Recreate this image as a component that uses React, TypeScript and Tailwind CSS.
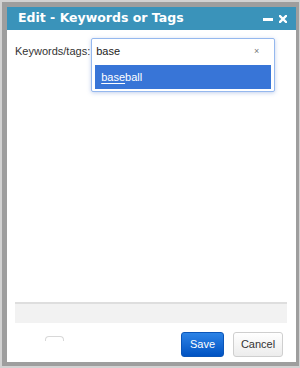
import { useState } from 'react';

export default function App() {
  const [query] = useState('base');
  const match = 'baseball';

  return (
    <div className="w-[300px] h-[368px] bg-[#d2d2d2] pt-[2px] pl-[2px] pr-[1px] pb-[2px] font-['Liberation_Sans',Arial,sans-serif]">
      <div className="h-full flex flex-col bg-white border-[#9e9e9e] border-l-[5px] border-t-[5px] border-r-[3px] border-b-[4px]">
        {/* title bar */}
        <div className="h-[23px] shrink-0 bg-[#3a93ba] flex items-center pl-[11px] pr-[9px]">
          <span className="text-white font-bold text-[12.5px] font-['DejaVu_Sans',Verdana,sans-serif]">
            Edit - Keywords or Tags
          </span>
          <div className="ml-auto flex items-center gap-[6px]">
            <span className="block w-[10px] h-[3px] bg-white mt-[1px]" />
            <svg width="8" height="8" viewBox="0 0 8 8">
              <path d="M1 1 L7 7 M7 1 L1 7" stroke="white" strokeWidth="2.4" strokeLinecap="square" />
            </svg>
          </div>
        </div>

        {/* body */}
        <div className="flex-1 flex flex-col px-[8px]">
          <div className="flex items-start pt-[8px]">
            <label className="text-[11px] text-[#333] mt-[5px] whitespace-nowrap">Keywords/tags:</label>
            <div className="ml-[1px] w-[184px] h-[54px] border border-[#95b8ee] rounded-[2px] shadow-[0_1px_4px_rgba(80,120,200,0.35)] bg-white">
              <div className="h-[25px] flex items-center pl-[4px] pr-[15px]">
                <span className="text-[11px] text-[#222]">{query}</span>
                <span className="ml-auto text-[9px] text-[#777] leading-none">×</span>
              </div>
              <div className="mx-[3px] mt-[1px] h-[24px] bg-[#3875d7] flex items-center pl-[6px]">
                <span className="text-[11px] text-white">
                  <span className="underline underline-offset-[2px]">{match.slice(0, query.length)}</span>
                  {match.slice(query.length)}
                </span>
              </div>
            </div>
          </div>

          <div className="flex-1" />

          {/* status strip */}
          <div className="h-[21px] mr-[1px] bg-[#f2f2f2] border-t-2 border-[#dedede]" />

          {/* footer */}
          <div className="h-[39px] flex items-start">
            <div className="ml-[30px] mt-[13px] w-[19px] h-[5px] border border-b-0 border-[#d8d8d8] rounded-t-[4px]" />
            <div className="ml-auto mt-[9px] flex gap-[9px] pr-[5px]">
              <button className="w-[43px] h-[25px] rounded-[3px] border border-[#0a55b8] bg-gradient-to-b from-[#2c83e6] to-[#0052c2] text-white text-[11px]">
                Save
              </button>
              <button className="w-[50px] h-[25px] rounded-[3px] border border-[#cfcfcf] bg-gradient-to-b from-[#ffffff] to-[#ececec] text-[#333] text-[11px]">
                Cancel
              </button>
            </div>
          </div>
        </div>
      </div>
    </div>
  );
}
